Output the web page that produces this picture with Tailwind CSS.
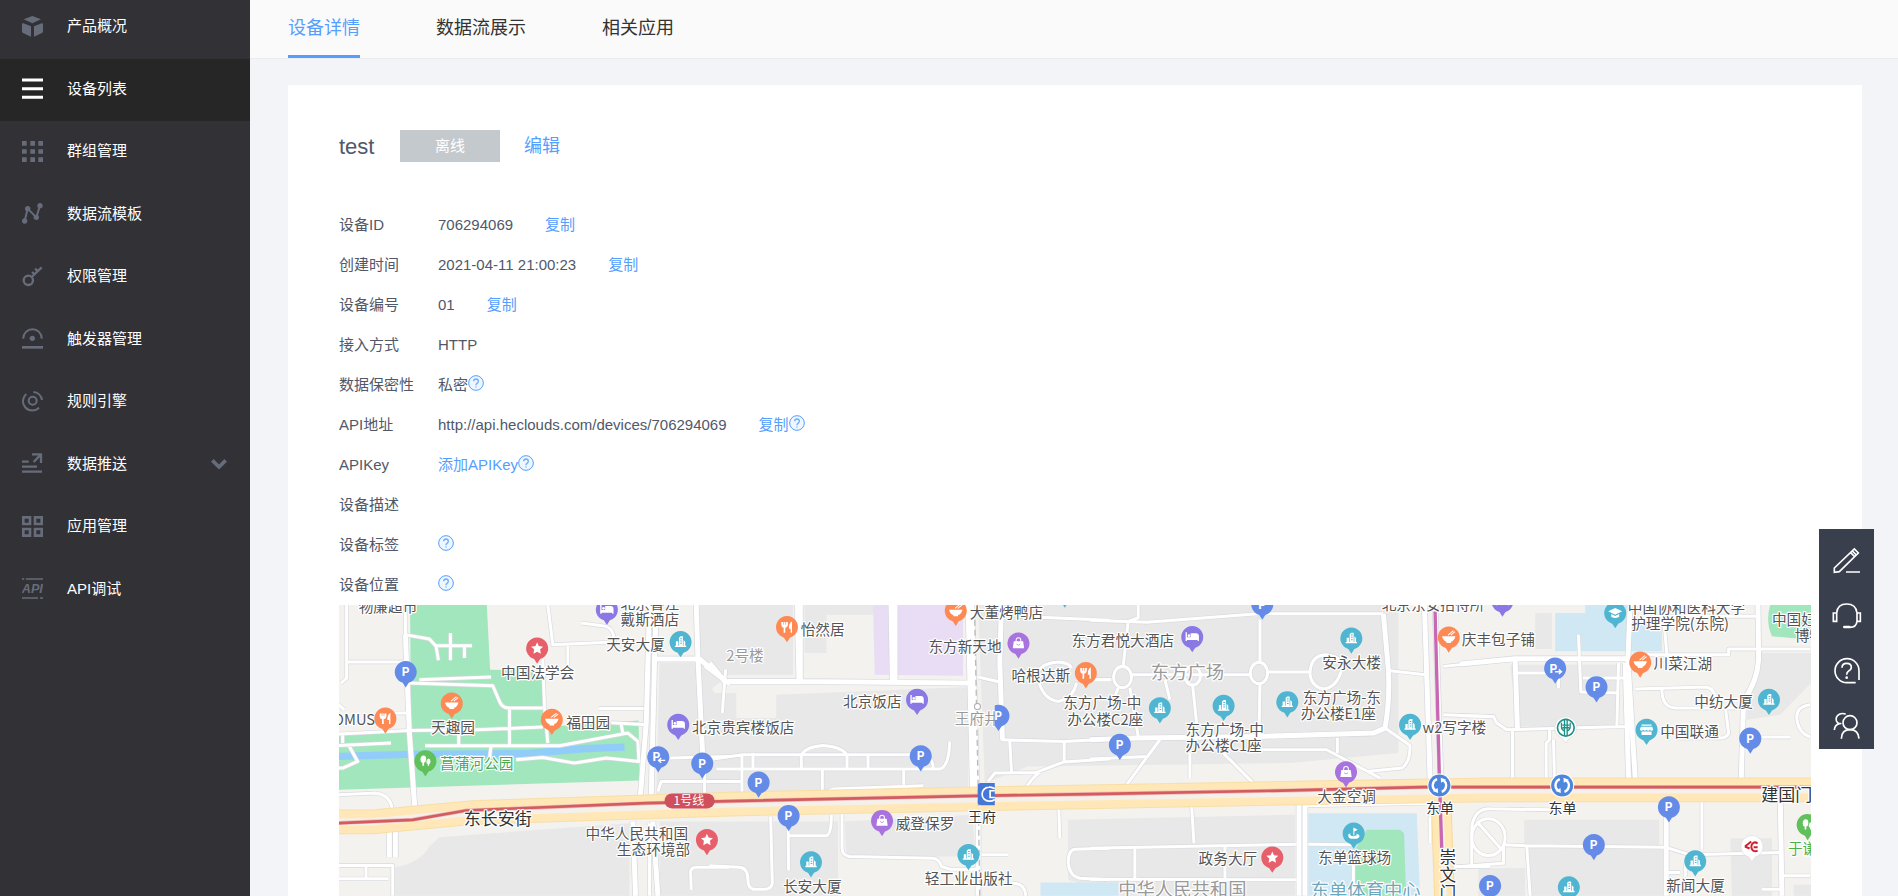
<!DOCTYPE html>
<html lang="zh-CN">
<head>
    <meta charset="UTF-8">
    <meta name="viewport" content="width=device-width, initial-scale=1.0">
    <title>设备详情</title>
    <script src="https://cdn.jsdelivr.net/npm/@tailwindcss/browser@4"></script>
</head>
<body class="bg-[#f3f4f7] font-['Liberation_Sans','Noto_Sans_CJK_SC',sans-serif] text-[15px] text-[#50586a]">
    <div class="flex h-screen overflow-hidden">

        <!-- Sidebar -->
        <nav class="w-[250px] shrink-0 overflow-hidden bg-[#323136] text-[#666c7a]">
            <ul class="-mt-1 grid h-[625px] grid-rows-10">
                <li>
                    <a href="#" class="flex h-full items-center gap-6 px-[22px] pb-0.5">
                        <svg class="size-[21px]" viewBox="0 0 63 63" fill="currentColor"><path d="M31 0 57 10 31 22 5 10Z"/><path d="M0 25q0-4 4-3l23 9v31L3 51q-3-1-3-5ZM63 25q0-4-4-3l-23 9v31l24-11q3-1 3-5Z"/></svg>
                        <span class="text-white">产品概况</span>
                    </a>
                </li>
                <li>
                    <a href="#" class="flex h-full items-center gap-6 bg-[#262626] px-[22px] pb-0.5 text-white">
                        <svg class="size-[21px]" viewBox="0 0 63 63" stroke="currentColor" stroke-width="9"><path d="M0 6h63M0 32h63M0 58h63"/></svg>
                        <span>设备列表</span>
                    </a>
                </li>
                <li>
                    <a href="#" class="flex h-full items-center gap-6 px-[22px] pb-0.5">
                        <svg class="size-[21px]" viewBox="0 0 63 63" fill="currentColor"><path d="M0 0h14v14H0ZM25 0h14v14H25ZM49 0h14v14H49ZM0 25h14v13H0ZM25 25h14v13H25ZM49 25h14v13H49ZM0 49h14v14H0ZM25 49h14v14H25ZM49 49h14v14H49Z"/></svg>
                        <span class="text-white">群组管理</span>
                    </a>
                </li>
                <li>
                    <a href="#" class="flex h-full items-center gap-6 px-[22px] pb-0.5">
                        <svg class="size-[21px]" viewBox="0 0 63 63" fill="currentColor"><path d="M8 54 17 17 43 43 54 7" fill="none" stroke="currentColor" stroke-width="6"/><circle cx="8" cy="54" r="8"/><circle cx="17" cy="17" r="8"/><circle cx="43" cy="43" r="8"/><circle cx="54" cy="8" r="8"/></svg>
                        <span class="text-white">数据流模板</span>
                    </a>
                </li>
                <li>
                    <a href="#" class="flex h-full items-center gap-6 px-[22px] pb-0.5">
                        <svg class="size-[21px]" viewBox="0 0 63 63" fill="none" stroke="currentColor" stroke-width="7"><circle cx="19" cy="43" r="14"/><path d="M29 33 59 4M39 8l10 9M30 18l9 8"/></svg>
                        <span class="text-white">权限管理</span>
                    </a>
                </li>
                <li>
                    <a href="#" class="flex h-full items-center gap-6 px-[22px] pb-0.5">
                        <svg class="size-[21px]" viewBox="0 0 63 63" fill="none" stroke="currentColor" stroke-width="6"><path d="M4 32v-1a27 27 0 0 1 55 0v1"/><path d="M0 58h63" stroke-width="8"/><circle cx="31" cy="31" r="8" fill="currentColor" stroke="none"/></svg>
                        <span class="text-white">触发器管理</span>
                    </a>
                </li>
                <li>
                    <a href="#" class="flex h-full items-center gap-6 px-[22px] pb-0.5">
                        <svg class="size-[21px]" viewBox="0 0 63 63" fill="none" stroke="currentColor" stroke-width="6"><circle cx="32" cy="29" r="12"/><path d="M13 9A28 28 0 1 0 51 50M34 3A27 27 0 0 1 60 27"/></svg>
                        <span class="text-white">规则引擎</span>
                    </a>
                </li>
                <li>
                    <a href="#" class="flex h-full items-center gap-6 px-[22px] pb-0.5">
                        <svg class="size-[21px]" viewBox="0 0 63 63" fill="none" stroke="currentColor" stroke-width="7"><path d="M0 26h20M0 41h45M0 56h60M30 4h27v26M56 5 35 27"/></svg>
                        <span class="text-white">数据推送</span>
                        <svg class="mr-px ml-auto h-[12px] w-[16px]" viewBox="0 0 48 36" fill="none" stroke="currentColor" stroke-width="11"><path d="M4 7l20 20L44 7"/></svg>
                    </a>
                </li>
                <li>
                    <a href="#" class="flex h-full items-center gap-6 px-[22px] pb-0.5">
                        <svg class="size-[21px]" viewBox="0 0 63 63" fill="none" stroke="currentColor" stroke-width="8"><path d="M4 4h20v20H4ZM39 4h20v20H39ZM4 39h20v20H4ZM39 39h20v20H39Z"/></svg>
                        <span class="text-white">应用管理</span>
                    </a>
                </li>
                <li>
                    <a href="#" class="flex h-full items-center gap-6 px-[22px] pb-0.5">
                        <svg class="size-[21px]" viewBox="0 0 63 63" fill="currentColor" aria-hidden="true"><path d="M0 3h7M12 3h51M0 60h48M54 60h9" stroke="currentColor" stroke-width="5"/><text x="31" y="46" font-size="38" font-weight="bold" font-style="italic" text-anchor="middle">API</text></svg>
                        <span class="text-white">API调试</span>
                    </a>
                </li>
            </ul>
        </nav>

        <div class="min-w-0 flex-1">
            <!-- Tabs -->
            <header class="flex h-[59px] gap-[76px] border-b border-[#ebecee] bg-[#fafafa] pl-[38px] text-lg text-[#333]">
                <a href="#" class="flex items-center border-b-3 border-[#559eff] text-[#559eff]">设备详情</a>
                <a href="#" class="flex items-center border-b-3 border-transparent">数据流展示</a>
                <a href="#" class="flex items-center border-b-3 border-transparent">相关应用</a>
            </header>

            <!-- Device card -->
            <main class="mt-[26px] mr-9 ml-[38px] bg-white px-[51px] pt-[45px] pb-10">
                <div class="flex h-8 items-center">
                    <h1 class="w-[61px] text-[22px]">test</h1>
                    <span class="flex h-8 w-[100px] items-center justify-center bg-[#c4c9cd] text-white">离线</span>
                    <a href="#" class="ml-6 text-lg text-[#559eff]">编辑</a>
                </div>

                <dl class="mt-[43px] grid auto-rows-[40px] grid-cols-[99px_1fr] items-center">
                    <dt>设备ID</dt>
                    <dd class="flex gap-8">706294069 <button type="button" class="text-[#559eff]">复制</button></dd>
                    <dt>创建时间</dt>
                    <dd class="flex gap-8">2021-04-11 21:00:23 <button type="button" class="text-[#559eff]">复制</button></dd>
                    <dt>设备编号</dt>
                    <dd class="flex gap-8">01 <button type="button" class="text-[#559eff]">复制</button></dd>
                    <dt>接入方式</dt>
                    <dd>HTTP</dd>
                    <dt>数据保密性</dt>
                    <dd class="flex items-center">私密<button type="button" aria-label="帮助" class="pb-1"><svg class="size-4"><use href="#help"/></svg></button></dd>
                    <dt>API地址</dt>
                    <dd class="flex items-center"><span class="mr-8">http://api.heclouds.com/devices/706294069</span><button type="button" class="text-[#559eff]">复制</button><button type="button" aria-label="帮助" class="pb-1"><svg class="size-4"><use href="#help"/></svg></button></dd>
                    <dt>APIKey</dt>
                    <dd class="flex items-center"><a href="#" class="text-[#559eff]">添加APIKey</a><button type="button" aria-label="帮助" class="pb-1"><svg class="size-4"><use href="#help"/></svg></button></dd>
                    <dt>设备描述</dt>
                    <dd></dd>
                    <dt>设备标签</dt>
                    <dd class="flex"><button type="button" aria-label="帮助" class="pb-1"><svg class="size-4"><use href="#help"/></svg></button></dd>
                    <dt>设备位置</dt>
                    <dd class="flex"><button type="button" aria-label="帮助" class="pb-1"><svg class="size-4"><use href="#help"/></svg></button></dd>
                </dl>

                <!-- Map -->
                <svg class="block w-full bg-[#f3f2ef] font-['Noto_Sans_CJK_SC',sans-serif]" viewBox="29 16 4413 1200" role="img" aria-label="设备位置地图">
                    <defs>
                        <symbol id="help" viewBox="0 0 48 48">
                            <circle cx="24" cy="24" r="22" fill="#eef6ff" stroke="#559eff" stroke-width="3"/>
                            <path d="M17 19q0-7 7-7t7 7q0 4-4 6-3 2-3 6" fill="none" stroke="#6fadff" stroke-width="4"/>
                            <circle cx="24" cy="36" r="2" fill="#6fadff"/>
                        </symbol>

                        <path id="pin" d="M0 46-9 32A33 33 0 1 1 9 32Z"/>
                        <g id="parking"><use href="#pin" fill="#658be8"/><text x="-13" y="13" font-size="36" font-weight="bold" fill="#fff">P</text></g>
                        <g id="exit"><use href="#pin" fill="#658be8"/><text x="-18" y="13" font-size="36" font-weight="bold" fill="#fff">P</text><path d="M0 10h18M11 3l8 7-8 7" fill="none" stroke="#fff" stroke-width="4"/></g>
                        <g id="entrance"><use href="#pin" fill="#658be8"/><text x="-18" y="13" font-size="36" font-weight="bold" fill="#fff">P</text><path d="M2 10h19M9 3l-8 7 8 7" fill="none" stroke="#fff" stroke-width="4"/></g>
                        <g id="building"><use href="#pin" fill="#4fb5d0"/><path d="M-17 15v-4h3V-2h7v13h2V-13L0-17H7v28h2V-6l5 5v12h3v4Z" fill="#fff"/><path d="M-1-10h5M-1-3h5M-1 4h5" stroke="#4fb5d0" stroke-width="3"/></g>
                        <g id="star"><use href="#pin" fill="#e75f6a"/><path d="M0-18 5-7l13 2-9 8 2 13L0 10l-11 6 2-13-9-8 13-2Z" fill="#fff"/></g>
                        <g id="bowl"><use href="#pin" fill="#fd8a55"/><path d="M-20-3h40Q17 10 7 13v4H-7v-4Q-17 10-20-3Z" fill="#fff"/><path d="M-2-7 14-20M6-7l13-10" stroke="#fff" stroke-width="3"/></g>
                        <g id="food"><use href="#pin" fill="#fd8a55"/><path d="M-17-15H3V-6q-2 8-8 8v15h-5V2q-6 0-7-8ZM15-17v34h-4V5H6q-1-16 9-22Z" fill="#fff"/><path d="M-10-15v8M-4-15v8" stroke="#fd8a55" stroke-width="2"/></g>
                        <g id="bed"><use href="#pin" fill="#8a78e4"/><path d="M-18-14v26M-18 7h36M18 12V-2Q18-9 11-9H-3V3h20M-17 3h12" fill="none" stroke="#fff" stroke-width="4"/><path d="M-3-9h14q7 0 7 7v7H-3Z" fill="#fff"/><circle cx="-10" cy="-4" r="4" fill="#fff"/></g>
                        <g id="bag"><use href="#pin" fill="#a873de"/><path d="M-14-6h28l3 21h-34Z" fill="#fff"/><path d="M-7-5v-5q0-7 7-7t7 7v5" fill="none" stroke="#fff" stroke-width="3"/><path d="M-6 2q6 7 12 0" fill="none" stroke="#a873de" stroke-width="2"/></g>
                        <g id="park"><use href="#pin" fill="#5fc05c"/><path d="M-6-17q9 0 8 12 0 9-6 10v9h-5V5q-6-1-6-10 1-12 9-12ZM9-8q7 1 6 10 0 6-4 7v5H7V9Q3 8 3 2q0-8 6-10Z" fill="#fff"/></g>
                        <g id="school"><use href="#pin" fill="#4fb5d0"/><path d="M0-15 21-5 0 5-21-5Z" fill="#fff"/><path d="M-12 3v8q12 8 24 0V3L0 9Z" fill="#fff"/></g>
                        <g id="shop"><use href="#pin" fill="#4fb5d0"/><path d="M-15-16h30v4h-30ZM-17-9h34l3 9q-5 6-10 0-5 6-10 0-5 6-10 0-5 6-10 0ZM-15 5h30v11h-30Z" fill="#fff"/></g>
                        <g id="golf"><use href="#pin" fill="#4fb5d0"/><path d="M-1 6v-24L12-11 2-6V6M-16 2q-4 14 16 14T17 5L9 0q2 8-10 8T-10-1Z" fill="#fff"/></g>
                        <g id="transfer"><circle r="36" fill="#fff"/><circle r="33" fill="#4d86dc"/><path d="M-7-19A20 20 0 0 0-13 15M7 19A20 20 0 0 0 13-15" fill="none" stroke="#fff" stroke-width="7"/><path d="M-20 17-5 8-4 23ZM20-17 5-8 4-23Z" fill="#fff"/></g>

                        <!-- side streets -->
                        <g id="streets">
                            <path d="M52 15v220l-17 15M52 187h178M228 15v90l72 13 20 22 7 42M363 100v82M320 138h108M405 138v37M27 315l18 15M165 340h75M270 240l215-8M240 250l250 8 18 42q8 25 30 25h102M640 180l5 140 10 110M27 403l213-11 200-2 200-8M40 403v27M27 437l158-7M60 440l25 45-45 20H27M388 395v40M287 438h403l205-38 30 25 3 60-98-10-95 15-95-17-80 7M540 330v105M485 437l-5 40M875 375l5 25M655 15l15 120 165-7M715 135v80M755 70l75 10q25 10 25 50M807 326h135M845 369l98 5M27 585l103-5q50 0 58 45M27 797h163v91M110 797v40M27 837h150M960 670v218M1022 475l178-5M985 575l10-30h205M1125 500v80M1125 200l75 55M1085 870l-2-55q2-12 17-13h100"/>
                            <path transform="translate(1140 0)" d="M48 210 38 340M10 478l90-13h520q52 0 50 40M275 505v-40q15-25 65-28 55 3 72 28v40M20 508h670q28-8 30-83M97 465v120M130 460v45M475 465v40M338 510v70M348 578l22-10 270-10M582 505v50M0 545h95M805 232l65 15M920 50l280 12M875 420l190 5 135-7M1063 425v60M900 425l5 90M835 545l20-25 125-2 80-31 140-9M950 562q20-32 40-44M985 240q15 60 60 65 45-10 55-55M985 215q15-25 60-28 35 3 40 18M1100 240h100M183 650l5 200q-3 18-23 18h-35q-15-3-15-28 0-35-25-38l-90-4M235 640l2 172M235 708h115q15-3 15-63M397 640v105q1 23 23 25l250 5q20 3 25 25l25 8h80M815 765h80M1047 628l3 87M1200 745l-105 3q-20 2-20 42 5 40 35 45l90 5M910 850q35 0 38 38"/>
                            <path transform="translate(2280 0)" d="M0 62l170 6 335-26h375M145 15v40l-30 10-15 135M85 265l-10 25M120 265l25 145M125 225h355M535 217h125M0 240h65M660 225q0-60 50-60 50 5 45 45-15 55-55 58-35-8-40-43M225 240l15 60M308 255l12 115M510 60v130M510 250l-3 160M210 420l-100 135M300 460v75M0 478l175-8M400 460l90 90M490 450h220l160 85M742 415v45M885 385l75 52q0 53-25 68l-105 10M900 213l105 12M1060 200l140-15M1060 345l140 5M305 615l7 115M0 745l620-12M405 740v100M135 745v93M0 838l620 2M645 618l365-8M655 733l135 2M790 790v98M1020 650v80M1070 800h130"/>
                            <ellipse cx="2378" cy="232" rx="27" ry="32"/><ellipse cx="2787" cy="220" rx="26" ry="32"/><ellipse cx="2588" cy="228" rx="24" ry="28"/>
                            <path transform="translate(3390 0)" d="M172 220h108M295 215v50M355 105l7 172 113 3M475 190l-5 190M368 235h132M0 348l100 2 10 20 30 20 360-10M157 390v145M268 390v30l-10 10v105M280 420l3 115M610 50l10 115M585 50h305M520 165h285v-17h245M525 268l215-6q25 8 25 38M605 270q0 55 45 55h180M795 320l10 80q-5 15-25 15H650M905 412h85M1050 315q-45 5-40 45 5 40 40 52M50 665l75 85M35 800V680q10-55 55-53l180 3M130 740v50L0 800M130 735l70 3 415 4 75 23 270-7M200 740l10 148M725 600v150M970 828h80M625 818h35M675 790v40M905 868h60"/>
                            <ellipse cx="3475" cy="712" rx="50" ry="55"/>
                        </g>
                        <!-- wide streets -->
                        <g id="avenues">
                            <path d="M228 105l12 295 16 220M180 695v78M198 695v78M960 15l-10 355-18 225M980 15l-5 165-10 415M975 178h135l80 67M1100 15l5 160 15 305M910 665l8 223M970 665l15 223"/>
                            <path transform="translate(1140 0)" d="M0 190l45 55h225l505 5M264 15v65l4 165M272 15v230M544 15l4 230M556 15v230M775 15l13 548M786 15l15 548M875 15l-5 175 8 230M805 630v258"/>
                            <path transform="translate(2280 0)" d="M0 420l140-5 370-5 340-10 35-15q15-85 10-175L880 42M1003 15l17 520M1035 15l18 540M627 615v273M645 615v273"/>
                            <path transform="translate(3390 0)" d="M0 193l165-16h335M165 177l7 213M510 15l-7 165 22 355M495 190l10 345M893 15l2 165q-5 70-45 120l-7 235M618 600v288M960 610l5 278"/>
                        </g>
                    </defs>

                    <!-- blocks -->
                    <g fill="#e8e8e8">
                        <path d="M1110 15h280v210h-190l-65 50-25-30ZM990 190h115l50 90h65v75h120v-70l575-23v300L980 590ZM330 712l570-42v218H195v-85q75-13 105-63ZM990 665h535v223H990ZM1425 15h205v30h-140v115h-65Z"/>
                        <path d="M1945 15h1260v445l-325 30-785 10-130 50ZM1545 665l385-20 5 125h-385ZM2215 660l680-15v243h-520l-160-48Z"/>
                        <path d="M3615 40h50v108h-50ZM3540 195h325v185h-305ZM4290 160h152v90l-92 95-100 15q0-110 40-200ZM3582 660h405v80h25v148h-415V735h-15ZM4200 715h125v173h-120ZM3445 805h140v83h-140ZM4390 855h52v33h-52Z"/>
                    </g>
                    <path d="M242 15h230l10 195 158 2 2 170 285-20 3 180-903 28V402l218-12Z" fill="#a1e6bd"/>
                    <path d="M1630 15h270v213l-265-3Z" fill="#e9dcf5"/>
                    <path d="M2935 640h325l10 248h-335ZM2132 848h233v40h-233ZM3675 40h90V15h140v60h90v80h-320Z" fill="#d0e7f4"/>
                    <path d="M3110 690h100l12 10 6 188h-153V750ZM4320 15h122v105l-117-10q-20-45-5-95Z" fill="#a1e6bd"/>
                    <path d="M27 470l208-6 365-3 160-14 125-5" fill="none" stroke="#92cdfa" stroke-width="22"/>

                    <g fill="none" stroke-linejoin="round">
                        <use href="#streets" stroke="#d9dade" stroke-width="13"/>
                        <use href="#avenues" stroke="#d5d7dd" stroke-width="19"/>
                        <use href="#streets" stroke="#fff" stroke-width="9"/>
                        <use href="#avenues" stroke="#fff" stroke-width="15"/>
                    </g>

                    <!-- Chang'an avenue and metro lines -->
                    <g fill="none">
                        <path d="M3333 600l10 288" stroke="#f8d99c" stroke-width="62"/>
                        <path d="M3333 600l10 288" stroke="#ffe8b5" stroke-width="56"/>
                        <path d="M3333 600l10 288" stroke="#f6f1e8" stroke-width="14"/>
                        <path d="M27 666l103 0 300-28 770-25 740-16 1000-18 540-9h962" stroke="#f7dfa8" stroke-width="74"/>
                        <path d="M27 666l103 0 300-28 770-25 740-16 1000-18 540-9h962" stroke="#ffe7b7" stroke-width="68"/>
                        <path d="M27 666l103 0 300-28 770-25 740-16 1000-18 540-9h962" stroke="#f5f0ea" stroke-width="22"/>
                        <path d="M1935 60l10 500 5 328" stroke="#bbb" stroke-width="4" stroke-dasharray="18 12"/>
                        <path d="M27 670l223-10 160-28 540-22 250-6 740-16 340-5 600-11 400-10h1162" stroke="#f0b9b4" stroke-width="12"/>
                        <path d="M27 670l223-10 160-28 540-22 250-6 740-16 340-5 600-11 400-10h1162" stroke="#d25c5f" stroke-width="8"/>
                        <path d="M3315 35l13 500 7 210" stroke="#c968b2" stroke-width="10"/>
                    </g>
                    <circle cx="1943" cy="320" r="9" fill="#fff" stroke="#aaa" stroke-width="3"/>
                    <rect x="1005" y="581" width="150" height="45" rx="22" fill="#cf505c"/>
                    <text x="1032" y="617" font-size="36" fill="#fff">1号线</text>

                    <!-- labels -->
                    <g font-size="44" fill="#555" stroke="#fff" stroke-width="7" stroke-linejoin="round" paint-order="stroke">
                        <text x="88" y="38">物廉超市</text>
                        <text x="873" y="29">北京香江</text>
                        <text x="873" y="76">戴斯酒店</text>
                        <text x="830" y="151">天安大厦</text>
                        <text x="515" y="235">中国法学会</text>
                        <text x="137" y="377" text-anchor="end">OMUS</text>
                        <text x="305" y="400">天趣园</text>
                        <text x="710" y="384">福田园</text>
                        <text x="332" y="507" fill="#49a957">菖蒲河公园</text>
                        <text x="403" y="677" font-size="51" fill="#333">东长安街</text>
                        <text x="1087" y="399">北京贵宾楼饭店</text>
                        <text x="768" y="719">中华人民共和国</text>
                        <text x="862" y="767">生态环境部</text>

                        <text x="1413" y="106">怡然居</text>
                        <text x="1190" y="185" fill="#999">2号楼</text>
                        <text x="1920" y="55">大董烤鸭店</text>
                        <text x="1796" y="156">东方新天地</text>
                        <text x="2225" y="138">东方君悦大酒店</text>
                        <text x="2045" y="244">哈根达斯</text>
                        <text x="1540" y="322">北京饭店</text>
                        <text x="1875" y="374" fill="#999">王府井</text>
                        <text x="1698" y="687">威登保罗</text>
                        <text x="1915" y="668" font-size="42" fill="#333">王府</text>
                        <text x="1360" y="876">长安大厦</text>
                        <text x="1785" y="853">轻工业出版社</text>

                        <text x="2200" y="326">东方广场-中</text>
                        <text x="2212" y="375">办公楼C2座</text>
                        <text x="2463" y="237" font-size="55" fill="#999">东方广场</text>
                        <text x="2977" y="206">安永大楼</text>
                        <text x="2918" y="309">东方广场-东</text>
                        <text x="2912" y="358">办公楼E1座</text>
                        <text x="2567" y="406">东方广场-中</text>
                        <text x="2567" y="455">办公楼C1座</text>
                        <text x="3277" y="401">w2写字楼</text>
                        <text x="3395" y="137">庆丰包子铺</text>
                        <text x="2962" y="607">大金空调</text>
                        <text x="3288" y="640" font-size="42" fill="#333">东单</text>
                        <text x="2964" y="790">东单篮球场</text>
                        <text x="2606" y="794">政务大厅</text>
                        <text x="2365" y="887" font-size="55" fill="#999">中华人民共和国</text>
                        <text x="2942" y="892" font-size="55" fill="#6fa8bd">东单体育中心</text>
                        <text x="3155" y="32">北京东安招待所</text>
                        <text font-size="50" fill="#333"><tspan x="3328" y="790">崇</tspan><tspan x="3328" y="843">文</tspan><tspan x="3328" y="896">门</tspan></text>

                        <text x="3893" y="39">中国协和医科大学</text>
                        <text x="3903" y="88">护理学院(东院)</text>
                        <text x="4325" y="76">中国妇</text>
                        <text x="4393" y="124">博物</text>
                        <text x="3970" y="209">川菜江湖</text>
                        <text x="4092" y="322">中纺大厦</text>
                        <text x="3990" y="413">中国联通</text>
                        <text x="3655" y="640" font-size="42" fill="#333">东单</text>
                        <text x="4293" y="603" font-size="51" fill="#333">建国门</text>
                        <text x="4373" y="764" fill="#49b148">于谦</text>
                        <text x="4008" y="872">新闻大厦</text>
                    </g>

                    <!-- pins -->
                    <use href="#parking" x="229" y="217"/>
                    <use href="#star" x="623" y="146"/>
                    <use href="#bowl" x="367" y="311"/>
                    <use href="#food" x="168" y="356"/>
                    <use href="#bowl" x="667" y="360"/>
                    <use href="#park" x="288" y="484"/>
                    <use href="#bed" x="832" y="30"/>
                    <use href="#building" x="1053" y="127"/>
                    <use href="#bed" x="1046" y="375"/>
                    <use href="#entrance" x="986" y="472"/>
                    <use href="#parking" x="1118" y="491"/>
                    <use href="#star" x="1132" y="720"/>
                    <use href="#food" x="1372" y="82"/>
                    <use href="#bowl" x="1878" y="33"/>
                    <use href="#bag" x="2066" y="131"/>
                    <use href="#food" x="2268" y="220"/>
                    <use href="#bed" x="1762" y="300"/>
                    <!-- this pin is cut by the edge of its tile -->
                    <clipPath id="tile"><path d="M1995 300h60v110h-60Z"/></clipPath>
                    <g clip-path="url(#tile)"><use href="#parking" x="2006" y="348"/></g>
                    <use href="#parking" x="1773" y="469"/>
                    <use href="#parking" x="1287" y="548"/>
                    <use href="#parking" x="1377" y="648"/>
                    <use href="#bag" x="1657" y="663"/>
                    <use href="#building" x="1444" y="787"/>
                    <use href="#building" x="1916" y="765"/>
                    <use href="#building" x="2205" y="-22"/>
                    <use href="#bed" x="2587" y="112"/>
                    <use href="#parking" x="2797" y="14"/>
                    <use href="#building" x="3064" y="116"/>
                    <use href="#building" x="2490" y="325"/>
                    <use href="#building" x="2681" y="318"/>
                    <use href="#building" x="2872" y="307"/>
                    <use href="#parking" x="2370" y="435"/>
                    <use href="#building" x="3240" y="375"/>
                    <use href="#bag" x="3048" y="517"/>
                    <use href="#bowl" x="3356" y="113"/>
                    <use href="#golf" x="3071" y="701"/>
                    <use href="#star" x="2827" y="773"/>
                    <use href="#transfer" x="3328" y="557"/>
                    <use href="#bed" x="3517" y="5"/>
                    <use href="#school" x="3855" y="40"/>
                    <use href="#exit" x="3675" y="206"/>
                    <use href="#bowl" x="3930" y="188"/>
                    <use href="#parking" x="3799" y="262"/>
                    <use href="#building" x="4316" y="300"/>
                    <use href="#shop" x="3949" y="390"/>
                    <use href="#parking" x="4260" y="416"/>
                    <use href="#transfer" x="3696" y="557"/>
                    <use href="#parking" x="4016" y="622"/>
                    <use href="#parking" x="3791" y="735"/>
                    <use href="#building" x="4095" y="784"/>
                    <use href="#building" x="3716" y="862"/>
                    <use href="#parking" x="3480" y="858"/>
                    <use href="#park" x="4432" y="675"/>

                    <!-- banks -->
                    <g transform="translate(3707 384)" fill="none" stroke="#1c9086"><use href="#pin" fill="#fff" stroke="#ddd" stroke-width="2"/><circle r="25" stroke-width="5"/><path d="M-4-27v52M4-27v52M-13-15V-2q0 8 9 12M13-15V-2q0 8-9 12M-10-8h20M-10 0h20" stroke-width="4"/></g>
                    <g transform="translate(4265 740)" fill="none" stroke="#d0202e"><use href="#pin" fill="#fff" stroke="#ddd" stroke-width="2"/><path d="M17-9Q8-16 1-8-6 3 3 12q7 5 14 0M5 2h12M-21 0-2-15M-21 0l14 6" stroke-width="6"/></g>

                    <!-- Wangfujing station -->
                    <path d="M1995 550h-42q-9 0-9 9v48q0 9 9 9h42Z" fill="#4577d8"/>
                    <path d="M1995 567q-9-6-17-5a21 21 0 0 0 0 42q8 1 17-5M1995 573h-14v20h14" fill="none" stroke="#fff" stroke-width="5"/>
                </svg>
            </main>
        </div>
    </div>

    <!-- Floating toolbar -->
    <div class="fixed right-6 bottom-[147px] grid w-[55px] bg-[#3a3f4d]">
        <button type="button" aria-label="反馈">
            <svg class="size-[55px]" viewBox="0 0 165 165" fill="none" stroke="#fff" stroke-width="5"><path d="M46 130v-13l60-57 12 12-57 56ZM94 70l13 13M99 65l13 13M81 129h42"/></svg>
        </button>
        <button type="button" aria-label="客服">
            <svg class="size-[55px]" viewBox="0 0 165 165" fill="none" stroke="#fff" stroke-width="5"><path d="M53 87q2-27 30-27t31 27M43 87h10v25H43ZM114 87h10v25h-10ZM114 112q-2 18-22 18"/><path d="M76 129h15" stroke-width="8" stroke-linecap="round"/></svg>
        </button>
        <button type="button" aria-label="帮助中心">
            <svg class="size-[55px]" viewBox="0 0 165 165" fill="none" stroke="#fff" stroke-width="5"><path d="M110 131H83a36 36 0 1 1 37-36v28M69 86q0-13 14-13t14 12q0 7-8 11-6 4-6 11"/><circle cx="83" cy="116" r="4" fill="#fff" stroke="none"/></svg>
        </button>
        <button type="button" aria-label="社区">
            <svg class="size-[55px]" viewBox="0 0 165 165" fill="none" stroke="#fff" stroke-width="5"><circle cx="93" cy="86" r="21"/><path d="M67 134q1-27 26-27t27 27M80 61q-9-5-19 0-12 7-9 19 2 6 9 9-14 4-15 19M61 89q4-1 6 0"/></svg>
        </button>
    </div>
</body>
</html>
